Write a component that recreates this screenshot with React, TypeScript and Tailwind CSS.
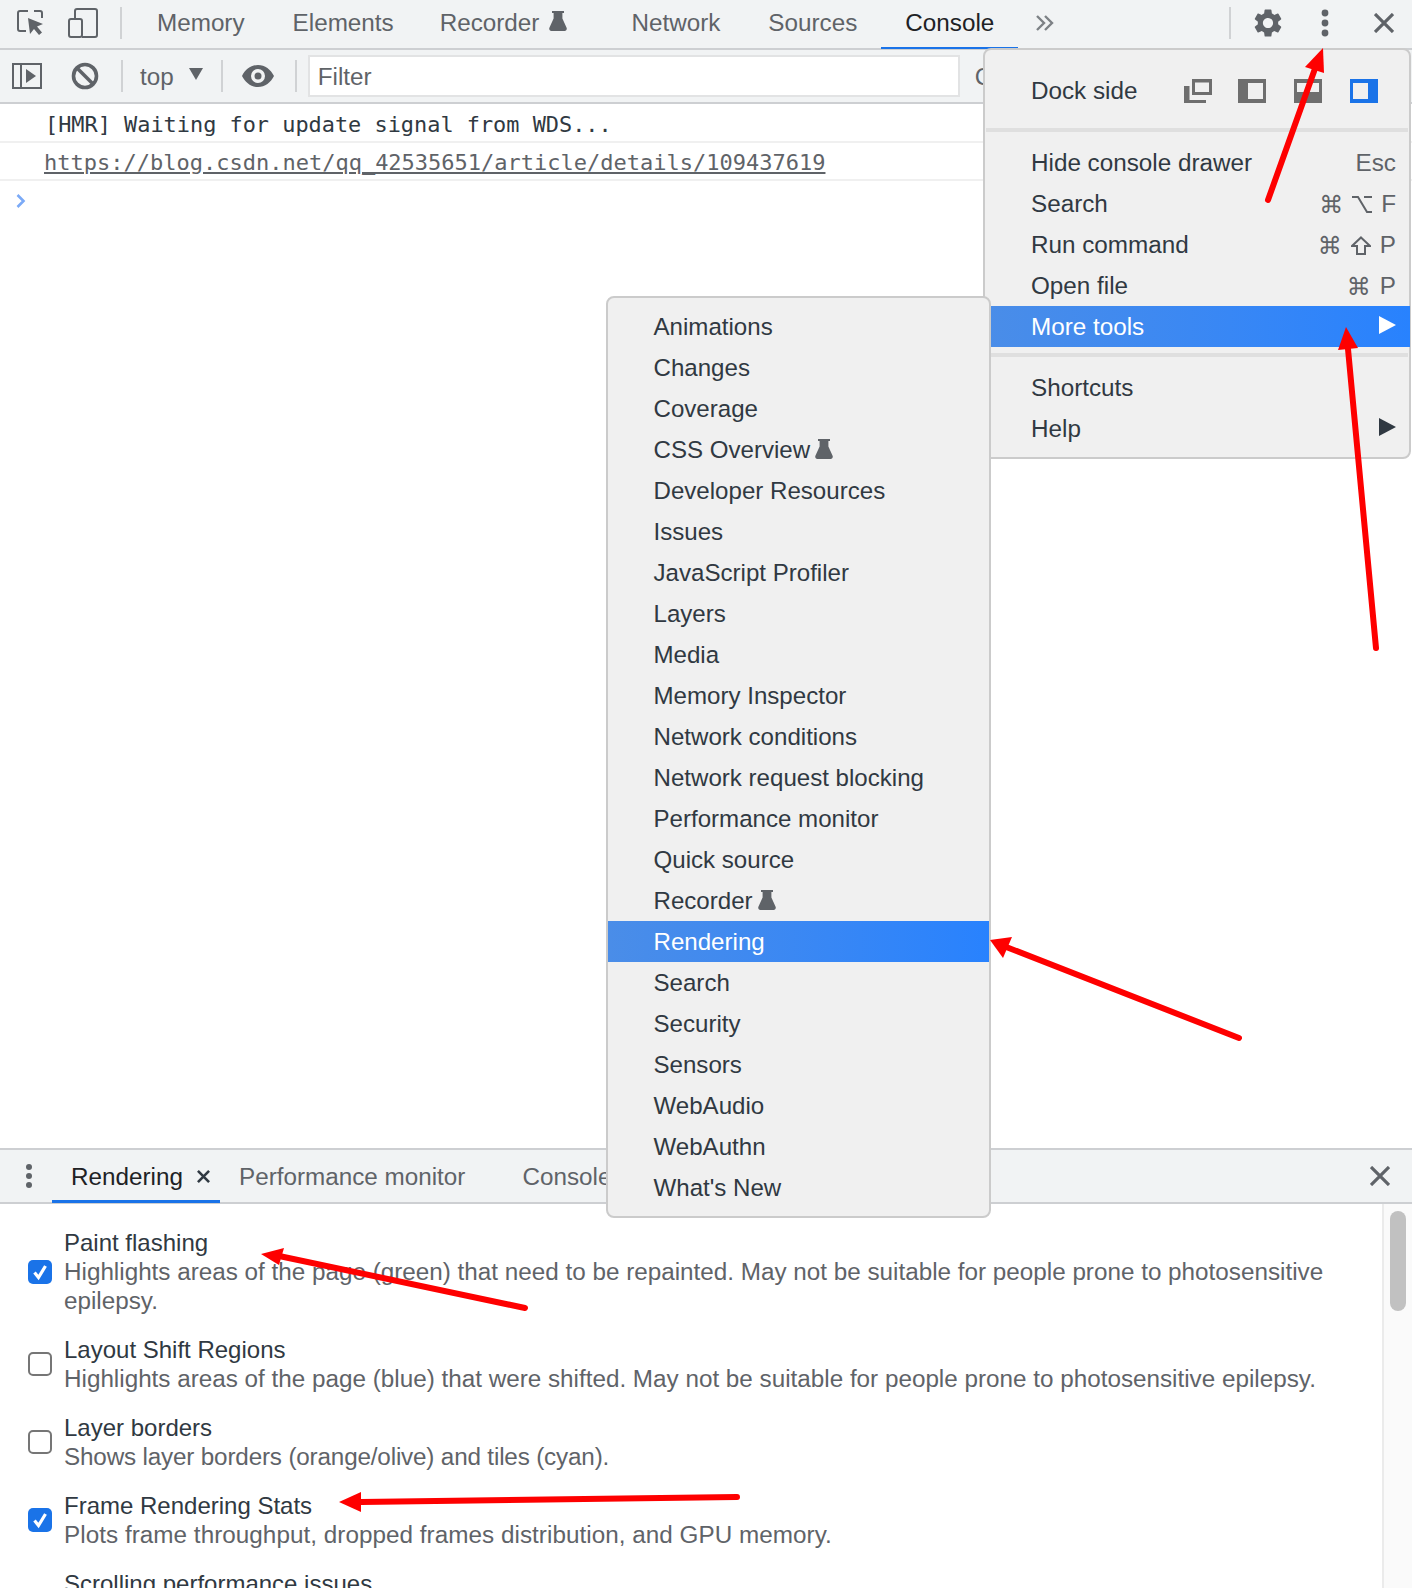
import React from "react";
import { MdSettings } from "react-icons/md";

const sans = "font-['Liberation_Sans',Arial,sans-serif]";

function Flask({ className = "" }: { className?: string }) {
  return (
    <svg viewBox="0 0 18 20" className={"w-[18px] h-[20px] " + className} fill="#5f6368">
      <path d="M3 0h12v2h-1.6v5.500l4.200 9.300c.6 1.400-.3 3.200-2 3.200H2.400c-1.700 0-2.600-1.800-2-3.200l4.200-9.300V2H3z" />
    </svg>
  );
}

function Sep({ className = "" }: { className?: string }) {
  return <div className={"w-[2px] h-[32px] bg-[#d0d2d4] shrink-0 " + className} />;
}

function CloseX({ className = "" }: { className?: string }) {
  return (
    <svg viewBox="0 0 20 20" className={"w-[20px] h-[20px] " + className} stroke="#5f6368" strokeWidth="3.200" fill="none">
      <path d="M1 1l18 18M19 1L1 19" />
    </svg>
  );
}

function TopTab({ label, active, flask }: { label: string; active?: boolean; flask?: boolean }) {
  return (
    <div
      className={
        "relative h-[48px] flex items-center shrink-0 " +
        (flask ? "pl-[22px] pr-[40px] " : "px-6 ") +
        (active ? "text-[#202124]" : "text-[#5f6368]")
      }
    >
      <span className="-mt-[1px]">{label}</span>
      {flask && <Flask className="ml-[10px] -mt-[6px]" />}
      {active && <div className="absolute left-0 right-0 bottom-[-1px] h-[2px] bg-[#1a73e8]" />}
    </div>
  );
}

function Cmd() {
  return <span className="font-['DejaVu_Sans',sans-serif] text-[24px] leading-none text-[#5f6368]">⌘</span>;
}

function Opt() {
  return (
    <svg viewBox="0 0 20 17" className="w-[20px] h-[17px] shrink-0" fill="none" stroke="#5f6368" strokeWidth="2">
      <path d="M0 1h6l9 15h5M12 1h8" />
    </svg>
  );
}

function Shift() {
  return (
    <svg viewBox="0 0 20 19" className="w-[20px] h-[19px] shrink-0" fill="none" stroke="#5f6368" strokeWidth="2">
      <path d="M10 1.500L19 10h-5v8H6v-8H1z" />
    </svg>
  );
}

function Row({
  label,
  keys,
  active,
  arrow,
}: {
  label: string;
  keys?: React.ReactNode;
  active?: boolean;
  arrow?: boolean;
}) {
  return (
    <div
      className={
        "h-[41px] flex items-center pl-[46px] pr-[14px] mr-[-1px] " +
        (active ? "bg-gradient-to-r from-[#4a8de8] to-[#2882fe] text-white" : "text-[#303942]")
      }
    >
      <span className="flex-1 pt-[2px]">{label}</span>
      {keys && <span className="flex items-center gap-[9px] pt-[2px] text-[#5f6368]">{keys}</span>}
      {arrow && (
        <svg viewBox="0 0 17 18" className="w-[17px] h-[18px] -mt-[3px]" fill={active ? "#ffffff" : "#303942"}>
          <path d="M0 0l17 9L0 18z" />
        </svg>
      )}
    </div>
  );
}

const tools = [
  "Animations",
  "Changes",
  "Coverage",
  "CSS Overview",
  "Developer Resources",
  "Issues",
  "JavaScript Profiler",
  "Layers",
  "Media",
  "Memory Inspector",
  "Network conditions",
  "Network request blocking",
  "Performance monitor",
  "Quick source",
  "Recorder",
  "Rendering",
  "Search",
  "Security",
  "Sensors",
  "WebAudio",
  "WebAuthn",
  "What's New",
];

function Option({
  title,
  desc,
  checked,
  descClass = "",
}: {
  title: string;
  desc: string;
  checked?: boolean;
  descClass?: string;
}) {
  return (
    <div className="flex items-center gap-[12px] mb-[20px]">
      {checked ? (
        <div className="w-[24px] h-[24px] rounded-[5px] bg-[#1a73e8] flex items-center justify-center shrink-0">
          <svg viewBox="0 0 24 24" className="w-[24px] h-[24px]" fill="none" stroke="#ffffff" strokeWidth="3.200">
            <path d="M6.500 12.500l4 5L17.500 6" />
          </svg>
        </div>
      ) : (
        <div className="w-[24px] h-[24px] rounded-[5px] border-2 border-[#767676] bg-white shrink-0" />
      )}
      <div className="leading-[29px]">
        <div className="text-[#303942] text-[24px]">{title}</div>
        <div className={"text-[#5f6368] " + descClass}>{desc}</div>
      </div>
    </div>
  );
}

function Arrow({ tail, tip, a, b }: { tail: string; tip: string; a: string; b: string }) {
  const [tx, ty] = tip.split(",").map(Number);
  const [ax, ay] = a.split(",").map(Number);
  const [bx, by] = b.split(",").map(Number);
  const [sx, sy] = tail.split(",").map(Number);
  const mx = (ax + bx) / 2;
  const my = (ay + by) / 2;
  return (
    <g>
      <line x1={sx} y1={sy} x2={mx} y2={my} stroke="#fe0000" strokeWidth="6" strokeLinecap="round" />
      <polygon points={`${tx},${ty} ${ax},${ay} ${bx},${by}`} fill="#fe0000" />
    </g>
  );
}

export default function App() {
  return (
    <div className={"relative w-[1412px] h-[1588px] overflow-hidden bg-white text-[24.25px] flex flex-col " + sans}>
      {/* main toolbar */}
      <div className="h-[50px] shrink-0 bg-[#f1f3f4] border-b-2 border-[#cdcfd2] flex items-center">
        <svg viewBox="0 0 27 25" className="w-[27px] h-[25px] ml-[17px] -mt-[3px] shrink-0" fill="none">
          <path d="M11 1H3a2 2 0 0 0-2 2v16a2 2 0 0 0 2 2h6M17 1h6a2 2 0 0 1 2 2v5" stroke="#5f6368" strokeWidth="2" />
          <path d="M11 8l15 6-6 2.500 5 6-3 2.500-5-6-4 5z" fill="#5f6368" />
        </svg>
        <svg viewBox="0 0 30 30" className="w-[30px] h-[30px] ml-[24px] -mt-[3px] shrink-0" fill="none" stroke="#5f6368" strokeWidth="2">
          <path d="M7 11V3a2 2 0 0 1 2-2h18a2 2 0 0 1 2 2v24a2 2 0 0 1-2 2H14" />
          <rect x="1" y="11" width="13" height="18" rx="2" />
        </svg>
        <Sep className="ml-[22px] mr-[11px] -mt-[3px]" />
        <TopTab label="Memory" />
        <TopTab label="Elements" />
        <TopTab label="Recorder" flask />
        <TopTab label="Network" />
        <TopTab label="Sources" />
        <TopTab label="Console" active />
        <svg viewBox="0 0 18 16" className="w-[18px] h-[16px] ml-[18px] -mt-[3px] shrink-0" fill="none" stroke="#7d8185" strokeWidth="2.400">
          <path d="M1 1l7 7-7 7M9 1l7 7-7 7" />
        </svg>
        <Sep className="ml-[175px] -mt-[3px]" />
        <MdSettings className="w-[34px] h-[34px] ml-[20px] -mt-[3px] text-[#5f6368] shrink-0" />
        <svg viewBox="0 0 8 28" className="w-[8px] h-[28px] ml-[36px] -mt-[3px] shrink-0" fill="#5f6368">
          <circle cx="4" cy="4" r="3.400" />
          <circle cx="4" cy="14" r="3.400" />
          <circle cx="4" cy="24" r="3.400" />
        </svg>
        <CloseX className="ml-[45px] -mt-[3px] shrink-0" />
      </div>

      {/* console toolbar */}
      <div className="h-[54px] shrink-0 bg-[#f1f3f4] border-b-2 border-[#cdcfd2] flex items-center text-[#5f6368]">
        <svg viewBox="0 0 30 26" className="w-[30px] h-[26px] ml-[12px] shrink-0" fill="none" stroke="#5f6368" strokeWidth="2">
          <rect x="1" y="1" width="28" height="24" />
          <path d="M9 1v24" />
          <path d="M14 6l10 7-10 7z" fill="#5f6368" stroke="none" />
        </svg>
        <svg viewBox="0 0 28 28" className="w-[28px] h-[28px] ml-[29px] shrink-0" fill="none" stroke="#5f6368" strokeWidth="3.600">
          <circle cx="14" cy="14" r="11.500" />
          <path d="M6 6l16 16" />
        </svg>
        <Sep className="ml-[22px]" />
        <span className="ml-[17px] mt-[3px]">top</span>
        <svg viewBox="0 0 14 12" className="w-[14px] h-[12px] ml-[15px] -mt-[4px] shrink-0" fill="#5f6368">
          <path d="M0 0h14L7 12z" />
        </svg>
        <Sep className="ml-[18px]" />
        <svg viewBox="0 0 32 22" className="w-[32px] h-[22px] ml-[19px] shrink-0" fill="#5f6368">
          <path fillRule="evenodd" d="M16 0C9 0 3.200 4.500 0 11c3.200 6.500 9 11 16 11s12.800-4.500 16-11C28.800 4.500 23 0 16 0zm0 18a7 7 0 1 1 0-14 7 7 0 0 1 0 14z" />
          <circle cx="16" cy="11" r="3.500" />
        </svg>
        <Sep className="ml-[21px]" />
        <div className="w-[652px] h-[42px] ml-[11px] -mt-[1px] bg-white border-2 border-[#e2e3e4] flex items-center pl-[8px] shrink-0">
          <span className="text-[#5f6368] mt-[4px]">Filter</span>
        </div>
        <span className="ml-[15px] mt-[2px] whitespace-nowrap">C</span>
      </div>

      {/* console output */}
      <div className="flex-1 bg-white font-['DejaVu_Sans_Mono',monospace] text-[22px]">
        <div className="h-[39px] border-b-2 border-[#f0f0f0] pl-[45px] flex items-center text-[#303942] whitespace-nowrap">
          <span className="mt-[6px] text-[21.9px]">[HMR] Waiting for update signal from WDS...</span>
        </div>
        <div className="h-[38px] border-b-2 border-[#f0f0f0] pl-[44px] flex items-center text-[#5f6368] whitespace-nowrap">
          <span className="underline mt-[2px]">https://blog.csdn.net/qq_42535651/article/details/109437619</span>
        </div>
        <svg viewBox="0 0 10 14" className="w-[10px] h-[14px] ml-[16px] mt-[13px]" fill="none" stroke="#7baaf7" strokeWidth="2.600">
          <path d="M1.500 1l6 6-6 6" />
        </svg>
      </div>

      {/* drawer */}
      <div className="h-[440px] shrink-0 flex flex-col">
        <div className="h-[56px] shrink-0 bg-[#f1f3f4] border-t-2 border-b-2 border-[#cdcfd2] flex items-center text-[#5f6368]">
          <svg viewBox="0 0 8 26" className="w-[8px] h-[26px] ml-[25px] shrink-0" fill="#5f6368">
            <circle cx="4" cy="4" r="3" />
            <circle cx="4" cy="13" r="3" />
            <circle cx="4" cy="22" r="3" />
          </svg>
          <div className="relative h-[52px] w-[168px] ml-[19px] pl-[19px] flex items-center shrink-0 text-[#202124]">
            <span className="pt-[2px]">Rendering</span>
            <svg viewBox="0 0 14 14" className="w-[13px] h-[13px] ml-[14px] shrink-0" fill="none" stroke="#303942" strokeWidth="2.800">
              <path d="M1 1l12 12M13 1L1 13" />
            </svg>
            <div className="absolute left-0 right-0 bottom-[-1px] h-[3px] bg-[#1a73e8]" />
          </div>
          <span className="ml-[19px] pt-[2px] whitespace-nowrap">Performance monitor</span>
          <span className="ml-[57px] pt-[2px] whitespace-nowrap">Console</span>
          <CloseX className="ml-auto mr-[22px] shrink-0" />
        </div>
        <div className="flex-1 flex overflow-hidden">
          <div className="flex-1 pt-[24px] pl-[28px] pr-[50px]">
            <Option
              checked
              title="Paint flashing"
              desc="Highlights areas of the page (green) that need to be repainted. May not be suitable for people prone to photosensitive epilepsy."
            />
            <Option
              title="Layout Shift Regions"
              desc="Highlights areas of the page (blue) that were shifted. May not be suitable for people prone to photosensitive epilepsy."
            />
            <Option
              title="Layer borders"
              desc="Shows layer borders (orange/olive) and tiles (cyan)."
              descClass="tracking-[-0.17px]"
            />
            <Option
              checked
              title="Frame Rendering Stats"
              desc="Plots frame throughput, dropped frames distribution, and GPU memory."
              descClass="tracking-[0.04px]"
            />
            <div className="pl-[36px] leading-[29px] text-[24px] text-[#303942] whitespace-nowrap">Scrolling performance issues</div>
          </div>
          <div className="w-[30px] shrink-0 bg-[#fafafa] border-l-2 border-[#ebebeb] pl-[6px] pt-[7px]">
            <div className="w-[16px] h-[100px] rounded-full bg-[#c1c1c1]" />
          </div>
        </div>
      </div>

      {/* main menu */}
      <div className="absolute left-[983px] top-[48px] w-[428px] h-[411px] bg-[#f0f0f0] border-2 border-[#cbcbcb] rounded-[8px]">
        <div className="h-[78px] flex items-center pl-[46px] pt-[4px] text-[#303942]">
          <span className="w-[153px]">Dock side</span>
          <svg viewBox="0 0 28 24" className="w-[28px] h-[24px] shrink-0" fill="#6e6e6e">
            <path fillRule="evenodd" d="M8 0h20v16H8zm3 3.500v9.500h14V3.500z" />
            <path d="M0 7h5.500v14H22v3H0z" />
          </svg>
          <svg viewBox="0 0 28 24" className="w-[28px] h-[24px] ml-[26px] shrink-0" fill="#6e6e6e">
            <path fillRule="evenodd" d="M0 0h28v24H0zm10 4v16h15V4z" />
          </svg>
          <svg viewBox="0 0 28 24" className="w-[28px] h-[24px] ml-[28px] shrink-0" fill="#6e6e6e">
            <path fillRule="evenodd" d="M0 0h28v24H0zm3 4v9h22V4z" />
          </svg>
          <svg viewBox="0 0 28 24" className="w-[28px] h-[24px] ml-[28px] shrink-0" fill="#1a73e8">
            <path fillRule="evenodd" d="M0 0h28v24H0zm3 4v16h15V4z" />
          </svg>
        </div>
        <div className="h-[4px] bg-[#dfdfdf] mx-[1px]" />
        <div className="pt-[10px]">
          <Row label="Hide console drawer" keys="Esc" />
          <Row label="Search" keys={<><Cmd /><Opt /><span>F</span></>} />
          <Row label="Run command" keys={<><Cmd /><Shift /><span>P</span></>} />
          <Row label="Open file" keys={<><Cmd /><span>P</span></>} />
          <Row label="More tools" active arrow />
        </div>
        <div className="h-[4px] bg-[#dfdfdf] mx-[1px] mt-[6px]" />
        <div className="pt-[10px]">
          <Row label="Shortcuts" />
          <Row label="Help" arrow />
        </div>
      </div>

      {/* more tools menu */}
      <div className="absolute left-[606px] top-[296px] w-[385px] h-[922px] bg-[#f0f0f0] border-2 border-[#cbcbcb] rounded-[8px] py-[8px] text-[24.1px]">
        {tools.map((t) => (
          <div
            key={t}
            className={
              "h-[41px] flex items-center pl-[45.5px] " +
              (t === "Rendering" ? "bg-gradient-to-r from-[#4a8de8] to-[#2882fe] text-white" : "text-[#303942]")
            }
          >
            <span className="pt-[2px]">{t}</span>
            {(t === "CSS Overview" || t === "Recorder") && <Flask className="ml-[5px] -mt-[1px]" />}
          </div>
        ))}
      </div>

      {/* annotation arrows */}
      <svg className="absolute left-0 top-0 w-[1412px] h-[1588px] pointer-events-none" viewBox="0 0 1412 1588">
        <Arrow tail="1268,200" tip="1323,48" a="1305,67" b="1324,73" />
        <Arrow tail="1376,648" tip="1346,327" a="1338,350" b="1358,348" />
        <Arrow tail="1239,1038" tip="990,940" a="1012,937" b="1003,958" />
        <Arrow tail="525,1308" tip="261,1254" a="284,1248" b="279,1265" />
        <Arrow tail="737,1497" tip="339,1502" a="361,1492" b="361,1512" />
      </svg>
    </div>
  );
}
